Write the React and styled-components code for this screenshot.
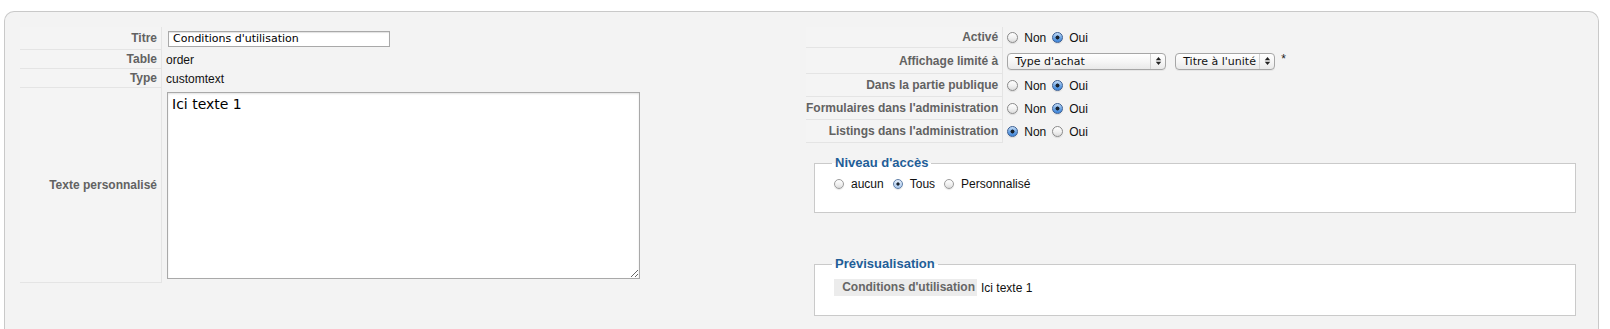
import React from 'react';
import styled, { createGlobalStyle } from 'styled-components';

const GlobalStyle = createGlobalStyle`
  html, body { margin: 0; padding: 0; background: #ffffff; }
  body {
    font-family: "Liberation Sans", Arial, Helvetica, sans-serif;
    font-size: 12px;
    color: #111;
  }
`;

const Page = styled.div`
  padding: 11px 11px 0 4px;
`;

const Panel = styled.div`
  display: flex;
  align-items: flex-start;
  box-sizing: border-box;
  min-height: 330px;
  padding: 15px 22px 20px 15px;
  background: #f3f3f3;
  border: 1px solid #c9c9c9;
  border-bottom: none;
  border-radius: 10px 10px 0 0;
`;

const LeftColumn = styled.div`
  flex: none;
  width: 786px;
`;

const RightColumn = styled.div`
  flex: 1;
  display: flex;
  flex-direction: column;
  min-width: 0;
`;

const FormGrid = styled.div`
  display: grid;
  grid-template-columns: ${p => p.$labelWidth ? `${p.$labelWidth}px` : 'max-content'} 1fr;
`;

const Label = styled.div`
  box-sizing: border-box;
  height: ${p => p.$h}px;
  display: flex;
  align-items: center;
  justify-content: flex-end;
  padding: 0 4px 0 0;
  background: #f4f4f4;
  border-right: 1px solid #e4e4e4;
  border-bottom: 1px solid #e4e4e4;
  color: #626262;
  font-weight: bold;
  white-space: nowrap;
`;

const Value = styled.div`
  display: flex;
  align-items: ${p => p.$top ? 'flex-start' : 'center'};
  padding-left: 4px;
  color: #111;
  white-space: nowrap;
`;

const TextInput = styled.input`
  box-sizing: border-box;
  width: 222px;
  height: 16px;
  margin: 0 0 0 2px;
  padding: 0 4px;
  border: 1px solid #a9a9a9;
  box-shadow: inset 0 1px 1px rgba(0, 0, 0, 0.12);
  background: #fff;
  font-family: "DejaVu Sans", "Liberation Sans", sans-serif;
  font-size: 11px;
  color: #000;
  outline: none;
`;

const TextArea = styled.textarea`
  box-sizing: border-box;
  width: 473px;
  height: 187px;
  margin: 4px 0 0 1px;
  padding: 3px 4px;
  border: 1px solid #a9a9a9;
  box-shadow: inset 0 1px 2px rgba(0, 0, 0, 0.12);
  background: #fff;
  font-family: "DejaVu Sans", "Liberation Sans", sans-serif;
  font-size: 14px;
  line-height: 16px;
  color: #000;
  outline: none;
`;

const Option = styled.label`
  display: inline-flex;
  align-items: center;
  gap: ${p => p.$small ? 7 : 6}px;
  margin-right: ${p => p.$small ? 9 : 6}px;
  color: #111;
  font-size: 12px;
`;

const Radio = styled.input.attrs({ type: 'radio' })`
  appearance: none;
  -webkit-appearance: none;
  box-sizing: border-box;
  flex: none;
  margin: 0;
  width: ${p => p.$small ? 10 : 11}px;
  height: ${p => p.$small ? 10 : 11}px;
  border-radius: 50%;
  border: 1px solid ${p => p.$small ? '#9c9c9c' : '#8a8a8a'};
  background: linear-gradient(#ffffff, #f0f0f0 55%, #dcdcdc);
  box-shadow: 0 1px 1px rgba(0, 0, 0, 0.1);
  &:checked {
    border-color: ${p => p.$small ? '#5f7fa8' : '#3a5e92'};
    background:
      radial-gradient(circle, #18222e 0, #18222e ${p => p.$small ? 1.3 : 1.7}px, transparent ${p => p.$small ? 1.9 : 2.3}px),
      linear-gradient(${p => p.$small ? '#e4eefa, #a9c7ec' : '#c6def8, #6aa3e4 55%, #3f86da'});
  }
`;

const PopUp = styled.div`
  display: inline-flex;
  align-items: stretch;
  box-sizing: border-box;
  width: ${p => p.$w}px;
  height: 17px;
  margin-right: ${p => p.$mr || 0}px;
  border: 1px solid #a6a6a6;
  border-radius: 4px;
  background: linear-gradient(#ffffff, #f6f6f6 50%, #e9e9e9);
  box-shadow: 0 1px 0 rgba(0, 0, 0, 0.05);
  font-family: "DejaVu Sans", "Liberation Sans", sans-serif;
  font-size: 11px;
  color: #111;
`;

const PopText = styled.span`
  flex: 1;
  padding-left: 7px;
  line-height: 15px;
  white-space: nowrap;
  overflow: hidden;
`;

const PopArrows = styled.span`
  flex: none;
  width: 14px;
  display: flex;
  align-items: center;
  justify-content: center;
  border-left: 1px solid #d2d2d2;
`;

const Asterisk = styled.span`
  margin-left: 6px;
  margin-top: -4px;
  font-size: 12px;
  color: #222;
`;

const Fieldset = styled.fieldset`
  margin: ${p => p.$mt}px 0 0 8px;
  padding: ${p => p.$pt}px 10px ${p => p.$pb}px 19px;
  border: 1px solid #cacaca;
  background: #ffffff;
  min-width: 0;
`;

const Legend = styled.legend`
  margin-left: -2px;
  padding: 0 3px;
  font-size: 13px;
  font-weight: bold;
  line-height: 16px;
  color: #1f5e98;
`;

const OptionRow = styled.div`
  display: flex;
  align-items: center;
  height: 14px;
`;

const PreviewRow = styled.div`
  display: flex;
  align-items: center;
  height: 17px;
`;

const PreviewLabel = styled.div`
  box-sizing: border-box;
  width: 143px;
  height: 17px;
  line-height: 17px;
  padding-right: 2px;
  text-align: right;
  background: #ececec;
  color: #666;
  font-weight: bold;
  white-space: nowrap;
`;

const PreviewValue = styled.div`
  padding-left: 4px;
  color: #111;
`;

function Arrows() {
  return (
    <svg width="7" height="10" viewBox="0 0 7 10">
      <path d="M0.8 4.2 L3.5 1 L6.2 4.2 Z" fill="#222" />
      <path d="M0.8 5.8 L3.5 9 L6.2 5.8 Z" fill="#222" />
    </svg>
  );
}

function Select({ width, text, mr }) {
  return (
    <PopUp $w={width} $mr={mr}>
      <PopText>{text}</PopText>
      <PopArrows><Arrows /></PopArrows>
    </PopUp>
  );
}

function YesNo({ name, yes }) {
  return (
    <>
      <Option><Radio name={name} defaultChecked={!yes} />Non</Option>
      <Option><Radio name={name} defaultChecked={yes} />Oui</Option>
    </>
  );
}

export default function App() {
  return (
    <>
      <GlobalStyle />
      <Page>
        <Panel>
          <LeftColumn>
            <FormGrid $labelWidth={142}>
              <Label $h={23}>Titre</Label>
              <Value><TextInput defaultValue="Conditions d'utilisation" /></Value>
              <Label $h={19}>Table</Label>
              <Value>order</Value>
              <Label $h={19}>Type</Label>
              <Value>customtext</Value>
              <Label $h={195}>Texte personnalisé</Label>
              <Value $top><TextArea defaultValue="Ici texte 1" /></Value>
            </FormGrid>
          </LeftColumn>
          <RightColumn>
            <FormGrid>
              <Label $h={21}>Activé</Label>
              <Value><YesNo name="active" yes /></Value>
              <Label $h={26}>Affichage limité à</Label>
              <Value>
                <Select width={159} text="Type d'achat" mr={9} />
                <Select width={100} text="Titre à l'unité" />
                <Asterisk>*</Asterisk>
              </Value>
              <Label $h={23}>Dans la partie publique</Label>
              <Value><YesNo name="public" yes /></Value>
              <Label $h={23}>Formulaires dans l'administration</Label>
              <Value><YesNo name="forms" yes /></Value>
              <Label $h={23}>Listings dans l'administration</Label>
              <Value><YesNo name="listings" yes={false} /></Value>
            </FormGrid>
            <Fieldset $mt={12} $pt={6} $pb={21}>
              <Legend>Niveau d'accès</Legend>
              <OptionRow>
                <Option $small><Radio $small name="access" />aucun</Option>
                <Option $small><Radio $small name="access" defaultChecked />Tous</Option>
                <Option $small><Radio $small name="access" />Personnalisé</Option>
              </OptionRow>
            </Fieldset>
            <Fieldset $mt={43} $pt={7} $pb={19}>
              <Legend>Prévisualisation</Legend>
              <PreviewRow>
                <PreviewLabel>Conditions d'utilisation</PreviewLabel>
                <PreviewValue>Ici texte 1</PreviewValue>
              </PreviewRow>
            </Fieldset>
          </RightColumn>
        </Panel>
      </Page>
    </>
  );
}
